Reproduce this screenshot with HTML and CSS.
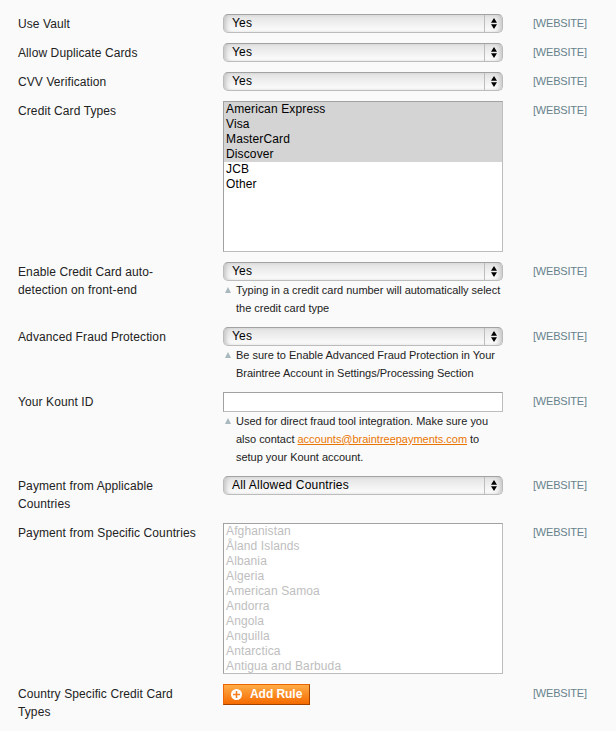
FILE: index.html
```html
<!DOCTYPE html>
<html lang="en">
<head>
<meta charset="utf-8">
<title>Payment configuration</title>
<link rel="stylesheet" href="styles.css">
</head>
<body>
<svg class="defs" aria-hidden="true"><symbol id="arrows" viewBox="0 0 6 11"><path d="M3 0 6 4.7H0zM0 6.3h6L3 11z"/></symbol></svg>
<main class="form">
  <div class="row"><div class="label"><span>Use Vault</span></div><div class="field"><div class="select"><span>Yes</span><i><svg><use href="#arrows"/></svg></i></div></div><div class="scope">[WEBSITE]</div></div>
  <div class="row"><div class="label"><span>Allow Duplicate Cards</span></div><div class="field"><div class="select"><span>Yes</span><i><svg><use href="#arrows"/></svg></i></div></div><div class="scope">[WEBSITE]</div></div>
  <div class="row"><div class="label"><span>CVV Verification</span></div><div class="field"><div class="select"><span>Yes</span><i><svg><use href="#arrows"/></svg></i></div></div><div class="scope">[WEBSITE]</div></div>
  <div class="row"><div class="label"><span>Credit Card Types</span></div><div class="field">
    <ul class="list"><li class="on">American Express</li><li class="on">Visa</li><li class="on">MasterCard</li><li class="on">Discover</li><li>JCB</li><li>Other</li></ul>
  </div><div class="scope">[WEBSITE]</div></div>
  <div class="row"><div class="label"><span>Enable Credit Card auto-<br>detection on front-end</span></div><div class="field">
    <div class="select"><span>Yes</span><i><svg><use href="#arrows"/></svg></i></div>
    <p class="note">Typing in a credit card number will automatically select<br>the credit card type</p>
  </div><div class="scope">[WEBSITE]</div></div>
  <div class="row"><div class="label"><span>Advanced Fraud Protection</span></div><div class="field">
    <div class="select"><span>Yes</span><i><svg><use href="#arrows"/></svg></i></div>
    <p class="note">Be sure to Enable Advanced Fraud Protection in Your<br>Braintree Account in Settings/Processing Section</p>
  </div><div class="scope">[WEBSITE]</div></div>
  <div class="row"><div class="label"><span>Your Kount ID</span></div><div class="field">
    <input class="input" type="text" aria-label="Your Kount ID">
    <p class="note">Used for direct fraud tool integration. Make sure you<br>also contact <a href="#">accounts@braintreepayments.com</a> to<br>setup your Kount account.</p>
  </div><div class="scope">[WEBSITE]</div></div>
  <div class="row"><div class="label"><span>Payment from Applicable<br>Countries</span></div><div class="field"><div class="select"><span>All Allowed Countries</span><i><svg><use href="#arrows"/></svg></i></div></div><div class="scope">[WEBSITE]</div></div>
  <div class="row"><div class="label"><span>Payment from Specific Countries</span></div><div class="field">
    <ul class="list off"><li>Afghanistan</li><li>Åland Islands</li><li>Albania</li><li>Algeria</li><li>American Samoa</li><li>Andorra</li><li>Angola</li><li>Anguilla</li><li>Antarctica</li><li>Antigua and Barbuda</li></ul>
  </div><div class="scope">[WEBSITE]</div></div>
  <div class="row"><div class="label"><span>Country Specific Credit Card<br>Types</span></div><div class="field">
    <button class="button" type="button"><svg viewBox="0 0 11 11"><circle cx="5.5" cy="5.5" r="5.5" fill="#fff"/><path d="M5.5 2v7M2 5.5h7" stroke="#f58220" stroke-width="1.6"/></svg><span>Add Rule</span></button>
  </div><div class="scope">[WEBSITE]</div></div>
</main>
</body>
</html>
```
FILE: styles.css
```css
* { box-sizing: border-box; }
body { margin: 0; background: #fafafa; color: #222; font: 12px/18px "Liberation Sans", Arial, sans-serif; }
.defs { display: none; }
.form { display: flex; flex-direction: column; gap: 10px; padding: 14px 0 0 18px; }
.row { display: grid; grid-template-columns: 205px 280px 83px; }
.label { padding-top: 1px; letter-spacing: .1px; white-space: nowrap; }
.scope { padding: 0 0 0 30px; font-size: 11px; color: #67828c; letter-spacing: -.2px; white-space: nowrap; }
.select { display: flex; height: 19px; border: 1px solid #bcbcbc; border-top-color: #a2a2a2; border-radius: 5px; overflow: hidden; color: #000; background: linear-gradient(#e2e2e2, #f0f0f0 50%, #fdfdfd); box-shadow: inset 4px 0 4px -2px #c4c4c4, inset -4px 0 4px -2px #c4c4c4; }
.select span { flex: 1; padding-left: 8px; line-height: 17px; letter-spacing: .2px; }
.select i { display: flex; width: 18px; border-left: 1px solid #bdbdbd; align-items: center; justify-content: center; }
.select svg { width: 6px; height: 11px; fill: #000; }
.list { height: 151px; margin: 0; padding: 0; list-style: none; border: 1px solid #bdbdbd; border-top-color: #a2a2a2; border-left-color: #a2a2a2; background: #fff; color: #000; line-height: 15px; letter-spacing: .13px; overflow: hidden; }
.list li { padding-left: 2px; }
.list .on { background: #d4d4d4; }
.list.off { color: #bebebe; }
.input { display: block; width: 280px; height: 20px; border: 1px solid #bdbdbd; border-top-color: #a2a2a2; border-left-color: #a2a2a2; background: #fff; }
.note { position: relative; margin: 0; padding-left: 13px; font-size: 11px; letter-spacing: -.02px; white-space: nowrap; }
.note::before { content: ""; position: absolute; left: 2px; top: 6px; border: 3.5px solid transparent; border-top: 0; border-bottom: 6px solid #a9b8be; }
.note a { color: #ea7601; }
.button { display: flex; align-items: center; width: 87px; height: 21px; padding: 0 0 0 7px; border: 1px solid; border-color: #ed6502 #a04300 #a04300 #ed6502; background: linear-gradient(#ffac47, #f56a00); color: #fff; font: bold 12px/17px "Liberation Sans", Arial, sans-serif; letter-spacing: -.05px; }
.button svg { width: 11px; height: 11px; margin-right: 8px; }
```
